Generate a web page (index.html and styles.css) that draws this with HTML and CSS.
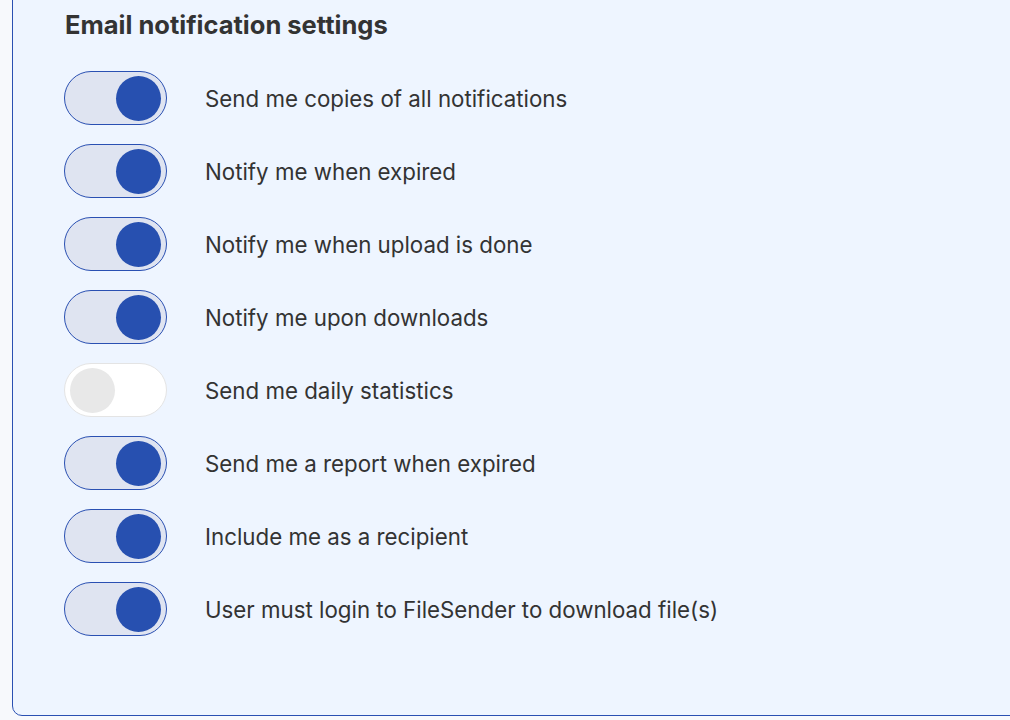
FILE: index.html
```html
<!DOCTYPE html>
<html lang="en">
<head>
  <meta charset="UTF-8">
  <title>Email notification settings</title>
  <link rel="stylesheet" href="styles.css">
</head>
<body>

  <div class="panel">
    <h2>Email notification settings</h2>

    <div class="options">
      <label class="option">
        <input type="checkbox" checked>
        <span class="switch"></span>
        <span class="text">Send me copies of all notifications</span>
      </label>
      <label class="option">
        <input type="checkbox" checked>
        <span class="switch"></span>
        <span class="text">Notify me when expired</span>
      </label>
      <label class="option">
        <input type="checkbox" checked>
        <span class="switch"></span>
        <span class="text">Notify me when upload is done</span>
      </label>
      <label class="option">
        <input type="checkbox" checked>
        <span class="switch"></span>
        <span class="text">Notify me upon downloads</span>
      </label>
      <label class="option">
        <input type="checkbox">
        <span class="switch"></span>
        <span class="text">Send me daily statistics</span>
      </label>
      <label class="option">
        <input type="checkbox" checked>
        <span class="switch"></span>
        <span class="text">Send me a report when expired</span>
      </label>
      <label class="option">
        <input type="checkbox" checked>
        <span class="switch"></span>
        <span class="text">Include me as a recipient</span>
      </label>
      <label class="option">
        <input type="checkbox" checked>
        <span class="switch"></span>
        <span class="text">User must login to FileSender to download file(s)</span>
      </label>
    </div>
  </div>

</body>
</html>
```

FILE: styles.css
```css
/* ====== RESET ====== */
html, body {
  margin: 0;
  padding: 0;
}

body {
  background-color: #f7f9fc;
  color: #333333;
  font-family: 'Inter', 'Noto Sans', sans-serif;
  overflow: hidden;
}

/* ====== PANEL ====== */
.panel {
  margin: -20px -20px 4px 12px;
  padding: 29px 20px 79px 51px;
  background-color: #eef5ff;
  border: 1px solid #2a50b2;
  border-radius: 10px;
}

.panel h2 {
  margin: 0 0 31px 1px;
  font-size: 25.5px;
  font-weight: 700;
  line-height: 30px;
}

.options {
  display: flex;
  flex-direction: column;
  gap: 19px;
}

.option {
  display: flex;
  align-items: center;
  gap: 38px;
  cursor: pointer;
}

.option input {
  display: none;
}

.option .text {
  font-size: 22.3px;
}

/* ====== SWITCH ====== */
.switch {
  position: relative;
  flex: none;
  width: 101px;
  height: 52px;
  border: 1px solid #e4e4e4;
  border-radius: 27px;
  background-color: #ffffff;
}

.switch::after {
  content: '';
  position: absolute;
  top: 4px;
  left: 5px;
  width: 45px;
  height: 45px;
  border-radius: 50%;
  background-color: #e8e8e8;
}

.option input:checked + .switch {
  border-color: #2a50b2;
  background-color: #dfe4f1;
}

.option input:checked + .switch::after {
  left: auto;
  right: 5px;
  background-color: #2750b0;
}
```
